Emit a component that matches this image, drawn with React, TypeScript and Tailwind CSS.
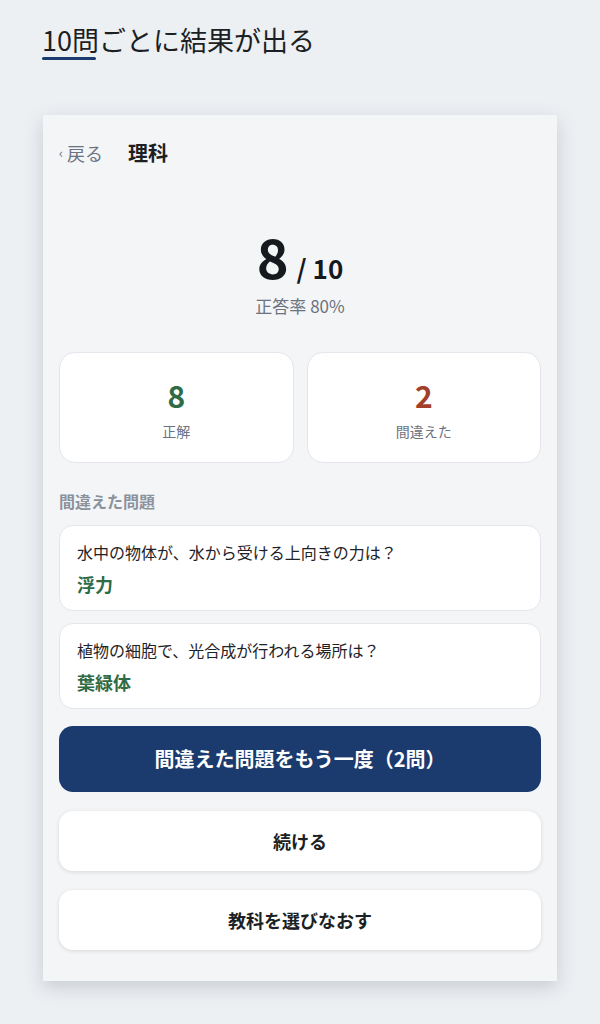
import * as React from "react";

const font = { fontFamily: '"Noto Sans CJK JP", "Noto Sans", sans-serif' };

function StatCard({ value, label, color }: { value: string; label: string; color: string }) {
  return (
    <div className="flex h-[111px] flex-col items-center justify-center rounded-[16px] border border-[#e3e6ea] bg-white">
      <div className={`text-[30px] leading-[40px] font-bold ${color}`}>{value}</div>
      <div className="mt-[6px] text-[14px] leading-[20px] text-[#6b7280]">{label}</div>
    </div>
  );
}

function MissedItem({ question, answer }: { question: string; answer: string }) {
  return (
    <div className="rounded-[14px] border border-[#e3e6ea] bg-white px-[17px] pt-[14px] pb-[14px]">
      <div className="text-[16px] leading-[24px] text-[#1f2328]">{question}</div>
      <div className="mt-[8px] text-[18px] leading-[24px] font-bold text-[#2f6b45]">{answer}</div>
    </div>
  );
}

export default function App() {
  return (
    <div className="min-h-[1024px] bg-[#edf0f3] pb-[40px]" style={font}>
      <div className="px-[42px] pt-[23px]">
        <h1 className="text-[27px] leading-[34px] font-normal text-[#1c1f23]">10問ごとに結果が出る</h1>
        <div className="h-[3px] w-[54px] rounded-full bg-[#1b3a6e]" />
      </div>

      <div className="mx-[43px] mt-[55px] bg-[#f4f5f7] px-[16px] pt-[25px] pb-[31px] shadow-[0_6px_18px_rgba(30,40,60,0.18)]">
        <div className="flex items-center gap-[25px]">
          <div className="flex items-center gap-[4px] text-[18px] leading-[26px] text-[#6b7280]">
            <span className="text-[13px]">‹</span>
            <span>戻る</span>
          </div>
          <div className="text-[20px] leading-[26px] font-bold text-[#1c1f23]">理科</div>
        </div>

        <div className="mt-[61px] flex flex-col items-center">
          <div className="flex items-baseline gap-[8px] text-[#16191d]">
            <span className="text-[54px] leading-[58px] font-bold">8</span>
            <span className="text-[26px] leading-[30px] font-bold">/ 10</span>
          </div>
          <div className="mt-[9px] text-[17px] leading-[24px] text-[#6b7280]">正答率 80%</div>
        </div>

        <div className="mt-[34px] grid grid-cols-2 gap-[13px]">
          <StatCard value="8" label="正解" color="text-[#2f6b45]" />
          <StatCard value="2" label="間違えた" color="text-[#a3402a]" />
        </div>

        <div className="mt-[27px] text-[16px] leading-[22px] font-bold text-[#8a929c]">間違えた問題</div>

        <div className="mt-[13px] flex flex-col gap-[12px]">
          <MissedItem question="水中の物体が、水から受ける上向きの力は？" answer="浮力" />
          <MissedItem question="植物の細胞で、光合成が行われる場所は？" answer="葉緑体" />
        </div>

        <div className="mt-[17px] flex flex-col gap-[19px]">
          <button className="h-[66px] rounded-[14px] bg-[#1b3a6e] text-[20px] font-bold text-white">
            間違えた問題をもう一度（2問）
          </button>
          <button className="h-[60px] rounded-[14px] bg-white text-[18px] font-bold text-[#1c1f23] shadow-[0_1px_4px_rgba(0,0,0,0.12)]">
            続ける
          </button>
          <button className="h-[60px] rounded-[14px] bg-white text-[18px] font-bold text-[#1c1f23] shadow-[0_1px_4px_rgba(0,0,0,0.12)]">
            教科を選びなおす
          </button>
        </div>
      </div>
    </div>
  );
}
